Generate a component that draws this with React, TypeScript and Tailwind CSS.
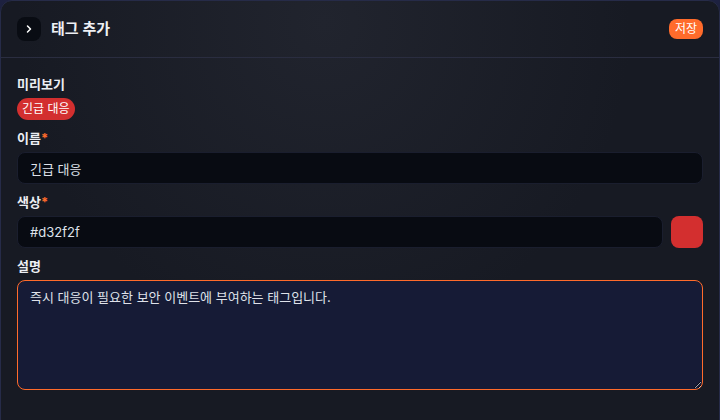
import { ChevronRight } from 'lucide-react';

const font = { fontFamily: '"Inter", "Noto Sans CJK KR", "Noto Sans", sans-serif' };

function Label({ text, required }: { text: string; required?: boolean }) {
  return (
    <div className="h-5 text-[13px] leading-5 font-bold text-[#eceef3]">
      {text}
      {required && <span className="text-[#ff6b2b]">*</span>}
    </div>
  );
}

export default function App() {
  return (
    <div className="w-[720px] h-[420px] overflow-hidden bg-[#1d2140]" style={font}>
      <div className="h-[440px] rounded-xl border border-[#262b48] bg-[#171a23] bg-[radial-gradient(ellipse_at_45%_5%,#21242e_0%,#171a23_55%)]">
        {/* Header */}
        <div className="flex items-center justify-between border-b border-[#2a2d40] px-4 py-4">
          <div className="flex items-center gap-2.5">
            <div className="flex h-6 w-6 items-center justify-center rounded-lg bg-[#090c13]">
              <ChevronRight size={12} strokeWidth={3} className="text-white" />
            </div>
            <h2 className="text-[15px] font-semibold text-[#eef0f4]">태그 추가</h2>
          </div>
          <button className="h-5 rounded-lg bg-[#ff6b2b] px-1.5 text-[12px] leading-5 text-white">
            저장
          </button>
        </div>

        {/* Body */}
        <div className="flex flex-col px-4 pt-4">
          <Label text="미리보기" />
          <div className="mt-1 mb-2 flex">
            <span className="h-[22px] rounded-full bg-[#d32f2f] px-[5px] text-[12px] leading-[22px] text-white">
              긴급 대응
            </span>
          </div>

          <Label text="이름" required />
          <input
            defaultValue="긴급 대응"
            className="mt-1 mb-2 h-8 w-full rounded-lg border border-[#1a1e2e] bg-[#080b12] px-3 text-[13px] text-[#dfe2ea] outline-none"
          />

          <Label text="색상" required />
          <div className="mt-1 mb-2 flex gap-2">
            <input
              defaultValue="#d32f2f"
              className="h-8 flex-1 rounded-lg border border-[#1a1e2e] bg-[#080b12] px-3 text-[13px] text-[#dfe2ea] outline-none"
            />
            <div className="h-8 w-8 rounded-lg bg-[#d32f2f]" />
          </div>

          <Label text="설명" />
          <textarea
            defaultValue="즉시 대응이 필요한 보안 이벤트에 부여하는 태그입니다."
            className="mt-1 h-[110px] w-full resize-y rounded-lg border border-[#ff6b2b] bg-[#161b36] px-3 pt-1.5 pb-2 text-[13px] leading-5 text-[#dfe2ea] outline-none"
          />
        </div>
      </div>
    </div>
  );
}
